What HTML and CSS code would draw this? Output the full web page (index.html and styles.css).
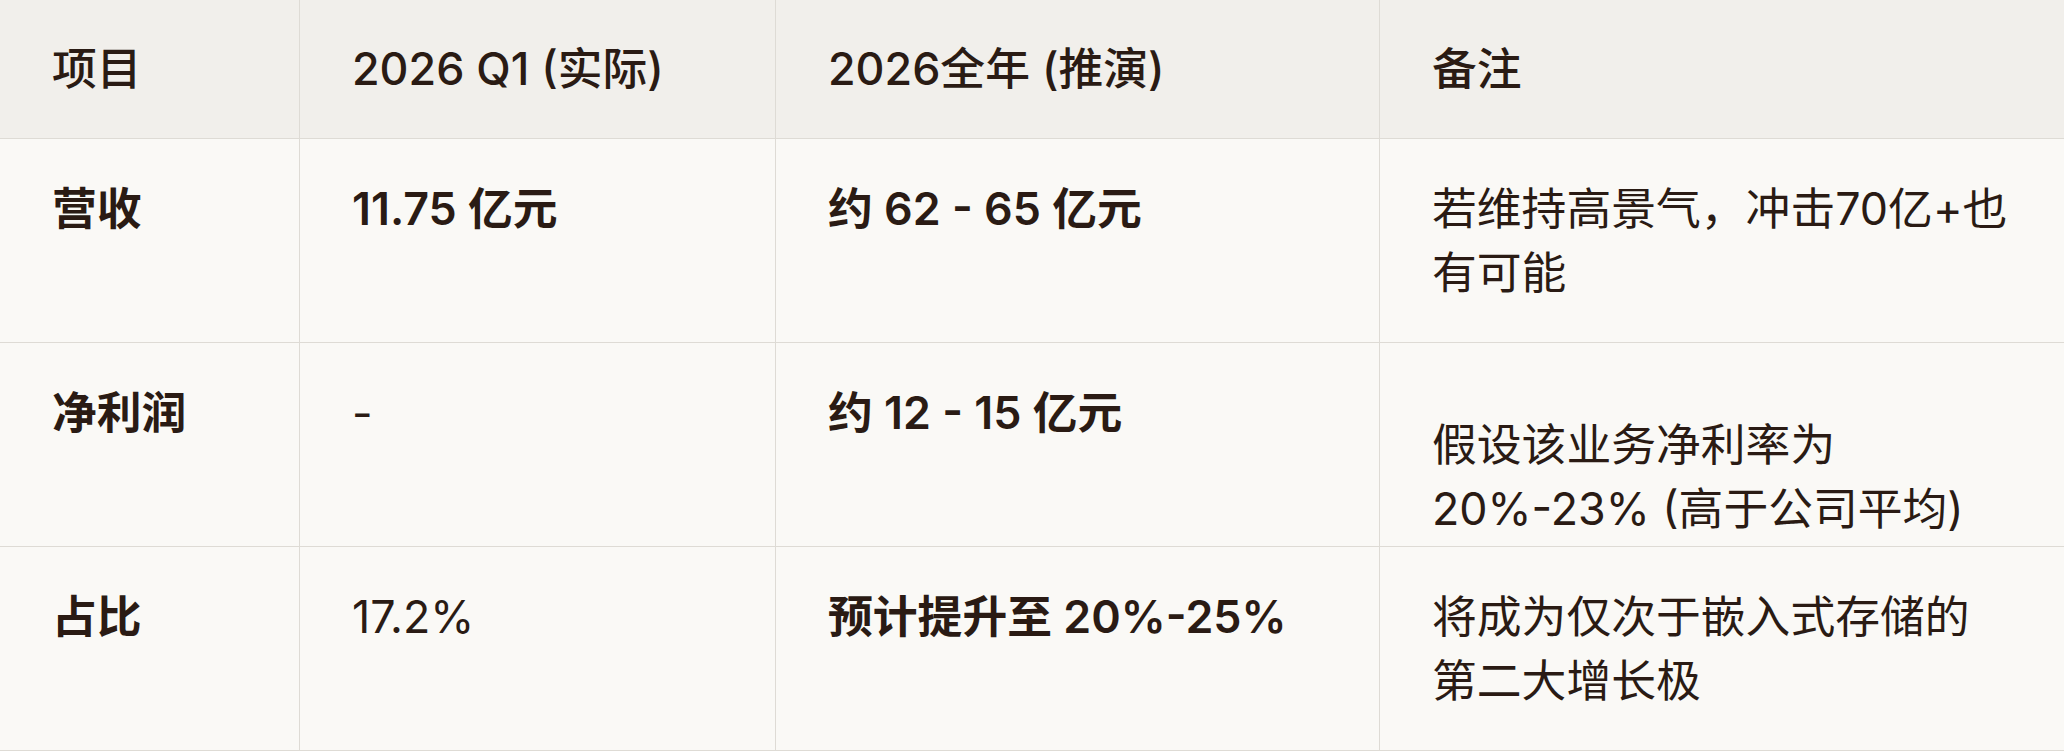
FILE: index.html
```html
<!DOCTYPE html>
<html lang="zh-CN">
<head>
<meta charset="utf-8">
<title>业务推演</title>
<link rel="stylesheet" href="styles.css">
</head>
<body>
<table class="data-table">
  <thead>
    <tr>
      <th class="col-1">项目</th>
      <th class="col-2">2026 Q1 (实际)</th>
      <th class="col-3">2026全年 (推演)</th>
      <th class="col-4">备注</th>
    </tr>
  </thead>
  <tbody>
    <tr>
      <td class="label">营收</td>
      <td class="strong">11.75 亿元</td>
      <td class="strong">约 62 - 65 亿元</td>
      <td class="note">若维持高景气，冲击70亿+也有可能</td>
    </tr>
    <tr>
      <td class="label">净利润</td>
      <td>-</td>
      <td class="strong">约 12 - 15 亿元</td>
      <td class="note note-low">假设该业务净利率为20%-23% (高于公司平均)</td>
    </tr>
    <tr>
      <td class="label">占比</td>
      <td>17.2%</td>
      <td class="strong">预计提升至 20%-25%</td>
      <td class="note">将成为仅次于嵌入式存储的第二大增长极</td>
    </tr>
  </tbody>
</table>
</body>
</html>
```

FILE: styles.css
```css
html, body {
  margin: 0;
  padding: 0;
  background: #faf9f6;
}

body {
  font-family: Inter, "Noto Sans CJK SC", sans-serif;
  color: #2a1b14;
}

.data-table {
  width: 2064px;
  table-layout: fixed;
  border-collapse: separate;
  border-spacing: 0;
  font-size: 44.8px;
  line-height: 64px;
}

.data-table th,
.data-table td {
  box-sizing: border-box;
  text-align: left;
  vertical-align: top;
  border-right: 1px solid #dedbd5;
  border-bottom: 1px solid #dedbd5;
}

.data-table th:last-child,
.data-table td:last-child {
  border-right: none;
}

.data-table th {
  padding: 37px 52px 37px;
  font-weight: 500;
  background: #f1efeb;
}

.data-table td {
  padding: 38px 52px 37px;
  font-weight: 400;
}

.col-1 { width: 300px; }
.col-2 { width: 476px; }
.col-3 { width: 604px; }
.col-4 { width: 684px; }

.data-table td.label,
.data-table td.strong {
  font-weight: 600;
}

.data-table td.note-low {
  padding-top: 70px;
  padding-bottom: 5px;
}
```
